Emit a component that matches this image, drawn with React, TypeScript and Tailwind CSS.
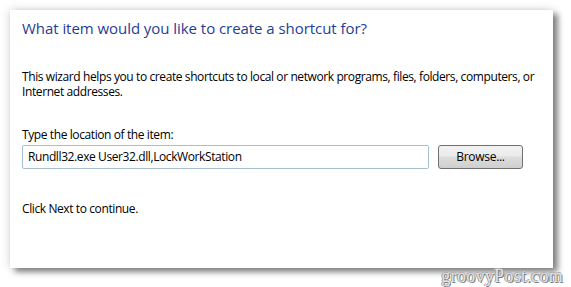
export default function App() {
    return (
        <div className="relative h-[287px] w-[571px] overflow-hidden bg-white pl-[10px] pt-[10px] font-['Open_Sans',sans-serif]">
            <div className="h-[258px] w-[543px] bg-white pl-[12px] pt-[8px] shadow-[0_0_9px_rgba(0,0,0,0.18),5px_4px_6px_rgba(0,0,0,0.45)]">
                <h1 className="whitespace-nowrap text-[15px] leading-[20px] tracking-[-0.05px] text-[#1f3d95]">
                    What item would you like to create a shortcut for?
                </h1>

                <p className="mt-[31px] whitespace-nowrap text-[12px] leading-[15px] tracking-[-0.4px] text-black">
                    This wizard helps you to create shortcuts to local or network programs, files, folders, computers, or
                    <br />
                    Internet addresses.
                </p>

                <p className="mt-[28px] text-[12px] leading-[15px] tracking-[-0.4px] text-black">
                    Type the location of the item:
                </p>

                <div className="mt-[3px] flex items-center gap-[9px]">
                    <div className="flex h-[24px] w-[407px] items-center rounded-[2px] border border-[#a6bfd2] pl-[5px] text-[12px] tracking-[-0.4px] text-black">
                        Rundll32.exe User32.dll,LockWorkStation
                    </div>
                    <button
                        type="button"
                        className="h-[24px] w-[85px] rounded-[3px] border border-[#707070] bg-[linear-gradient(#f2f2f2,#ebebeb_45%,#dddddd_50%,#cfcfcf)] text-[12px] tracking-[-0.3px] text-black"
                    >
                        Browse...
                    </button>
                </div>

                <p className="mt-[32px] text-[12px] leading-[15px] tracking-[-0.4px] text-black">
                    Click Next to continue.
                </p>
            </div>

            <span className="absolute bottom-[2px] right-[8px] font-['Liberation_Serif',serif] text-[18px] leading-none tracking-[0.3px] text-[#e2e2e2] [text-shadow:1px_1px_0_#7a7a7a,-1px_0_0_#a0a0a0,0_-1px_0_#b0b0b0]">
                groovyPost.com
            </span>
        </div>
    );
}
